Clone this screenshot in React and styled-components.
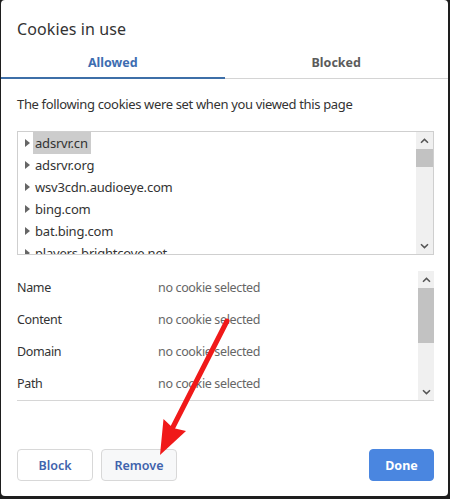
import styled, { createGlobalStyle } from "styled-components"

const GlobalStyle = createGlobalStyle`
    body {
        margin: 0;
        background: #1e1e1e;
        font-family: "Noto Sans", "Open Sans", sans-serif;
    }
`

const cookies = [
    "adsrvr.cn",
    "adsrvr.org",
    "wsv3cdn.audioeye.com",
    "bing.com",
    "bat.bing.com",
    "players.brightcove.net",
]

const details = ["Name", "Content", "Domain", "Path"]

function Chevron({ down }) {
    return (
        <svg width="9" height="6" viewBox="0 0 9 6">
            <path
                d={down ? "M1 1.2 L4.5 4.6 L8 1.2" : "M1 4.8 L4.5 1.4 L8 4.8"}
                fill="none"
                stroke="#555"
                strokeWidth="1.5"
            />
        </svg>
    )
}

function Scrollbar({ thumbHeight, width }) {
    return (
        <StyledScrollbar $width={width}>
            <ArrowCell><Chevron /></ArrowCell>
            <Track>
                <Thumb $height={thumbHeight} />
            </Track>
            <ArrowCell><Chevron down /></ArrowCell>
        </StyledScrollbar>
    )
}

export default function App() {
    return (
        <Page>
            <GlobalStyle />
            <Dialog>
                <Title>Cookies in use</Title>
                <Tabs>
                    <Tab $active>Allowed</Tab>
                    <Tab>Blocked</Tab>
                </Tabs>
                <Body>
                    <Description>The following cookies were set when you viewed this page</Description>
                    <TreeBox>
                        <TreeList>
                            {cookies.map((name, i) => (
                                <TreeRow key={name}>
                                    <Caret />
                                    <TreeLabel $selected={i === 0}>{name}</TreeLabel>
                                </TreeRow>
                            ))}
                        </TreeList>
                        <Scrollbar thumbHeight={18} width={17} />
                    </TreeBox>
                    <DetailsBox>
                        <DetailsList>
                            {details.map((label) => (
                                <DetailRow key={label}>
                                    <DetailLabel>{label}</DetailLabel>
                                    <DetailValue>no cookie selected</DetailValue>
                                </DetailRow>
                            ))}
                        </DetailsList>
                        <Scrollbar thumbHeight={55} width={16} />
                    </DetailsBox>
                </Body>
                <Footer>
                    <Button>Block</Button>
                    <Button $muted>Remove</Button>
                    <Spacer />
                    <Button $primary>Done</Button>
                </Footer>
            </Dialog>
            <Arrow width="450" height="499" viewBox="0 0 450 499">
                <line x1="227" y1="321" x2="172" y2="429" stroke="#f01919" strokeWidth="5" strokeLinecap="round" />
                <polygon points="160,455 163.5,419 173,428 186,431" fill="#f01919" />
            </Arrow>
        </Page>
    )
}

const Page = styled.div`
    position: relative;
    width: 450px;
    height: 499px;
    overflow: hidden;
`

const Dialog = styled.div`
    width: 447px;
    height: 496px;
    margin-left: 1px;
    background: #ffffff;
    border-radius: 4px;
    display: flex;
    flex-direction: column;
    color: #333333;
`

const Title = styled.h1`
    margin: 0;
    padding: 19px 0 0 16px;
    height: 29px;
    font-size: 16px;
    font-weight: 400;
    line-height: 20px;
    letter-spacing: 0.1px;
    color: #333333;
`

const Tabs = styled.div`
    display: flex;
`

const Tab = styled.div`
    flex: 1;
    height: 31px;
    padding-bottom: 2px;
    box-sizing: border-box;
    display: flex;
    justify-content: center;
    align-items: center;
    font-size: 12.5px;
    font-weight: 700;
    color: ${(p) => (p.$active ? "#3d6db1" : "#5b5b5b")};
    box-shadow: ${(p) => (p.$active ? "inset 0 -2px 0 #3e6fa8" : "inset 0 -1px 0 #d4d4d4")};
`

const Body = styled.div`
    padding: 0 14px 0 16px;
`

const Description = styled.p`
    margin: 15px 0 17px;
    font-size: 13px;
    letter-spacing: -0.35px;
    line-height: 20px;
    color: #333333;
`

const TreeBox = styled.div`
    width: 417px;
    height: 124px;
    box-sizing: border-box;
    border: 1px solid #cfcfcf;
    display: flex;
    overflow: hidden;
`

const TreeList = styled.div`
    flex: 1;
    overflow: hidden;
`

const TreeRow = styled.div`
    height: 22px;
    display: flex;
    align-items: center;
    padding-left: 7px;
`

const Caret = styled.span`
    width: 0;
    height: 0;
    border-top: 4px solid transparent;
    border-bottom: 4px solid transparent;
    border-left: 5px solid #666666;
    margin-right: 3px;
`

const TreeLabel = styled.span`
    font-size: 13px;
    letter-spacing: -0.2px;
    line-height: 22px;
    padding: 0 3px 0 2px;
    color: #333333;
    background: ${(p) => (p.$selected ? "#cccccc" : "transparent")};
`

const StyledScrollbar = styled.div`
    width: ${(p) => p.$width}px;
    background: #f0f0f0;
    display: flex;
    flex-direction: column;
`

const ArrowCell = styled.div`
    height: 17px;
    display: flex;
    justify-content: center;
    align-items: center;
`

const Track = styled.div`
    flex: 1;
`

const Thumb = styled.div`
    height: ${(p) => p.$height}px;
    background: #c2c2c2;
`

const DetailsBox = styled.div`
    margin-top: 16px;
    width: 417px;
    height: 130px;
    box-sizing: border-box;
    border-bottom: 1px solid #d6d6d6;
    display: flex;
`

const DetailsList = styled.div`
    flex: 1;
`

const DetailRow = styled.div`
    height: 32px;
    display: flex;
    align-items: center;
    font-size: 12.5px;
    letter-spacing: -0.35px;
`

const DetailLabel = styled.span`
    width: 141px;
    color: #333333;
`

const DetailValue = styled.span`
    color: #666666;
`

const Footer = styled.div`
    margin-top: 48px;
    padding: 0 14px 0 16px;
    display: flex;
    gap: 8px;
`

const Spacer = styled.div`
    flex: 1;
`

const Button = styled.button`
    height: 32px;
    width: ${(p) => (p.$primary ? "65px" : "76px")};
    box-sizing: border-box;
    border-radius: 4px;
    border: 1px solid ${(p) => (p.$primary ? "#4a86e0" : "#d8d8d8")};
    background: ${(p) => (p.$primary ? "#4a86e0" : p.$muted ? "#f7f8f9" : "#ffffff")};
    color: ${(p) => (p.$primary ? "#ffffff" : "#3f63ad")};
    font-family: inherit;
    font-size: 12.5px;
    font-weight: ${(p) => (p.$primary ? 700 : 600)};
    padding: 0;
`

const Arrow = styled.svg`
    position: absolute;
    left: 0;
    top: 0;
    pointer-events: none;
`
